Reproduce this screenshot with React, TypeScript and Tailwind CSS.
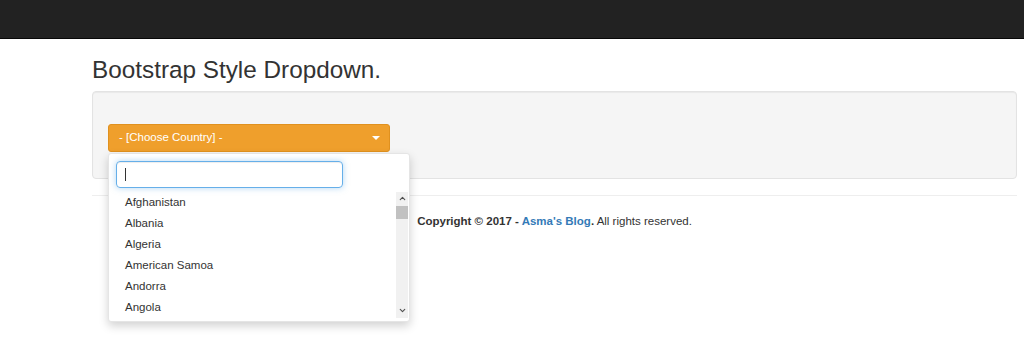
import { ChevronDown, ChevronUp } from 'lucide-react';

const countries = ['Afghanistan', 'Albania', 'Algeria', 'American Samoa', 'Andorra', 'Angola'];

function CountryMenu() {
  return (
    <div className="absolute left-0 top-[29px] z-10 w-[302px] h-[169px] bg-white border border-[#e5e5e5] rounded-[3px] shadow-[0_4px_10px_rgba(0,0,0,0.18)]">
      <div className="px-[7px] pt-[7px] pb-[4px]">
        <div className="relative w-[227px]">
          <input
            className="w-[227px] h-[27px] px-[8px] border border-[#66afe9] rounded-[4px] text-[13px] text-[#555] outline-none caret-transparent shadow-[inset_0_1px_1px_rgba(0,0,0,0.075),0_0_6px_rgba(102,175,233,0.5)]"
            defaultValue=""
          />
          {/* blinking caret as captured */}
          <span className="absolute left-[9px] top-[7px] w-px h-[13px] bg-[#333]" />
        </div>
      </div>
      <div className="flex">
        {/* options */}
        <ul className="flex-1 h-[126px] overflow-hidden">
          {countries.map((c) => (
            <li key={c} className="h-[21px] leading-[21px] pl-[16px] text-[11.5px] text-[#333]">
              {c}
            </li>
          ))}
        </ul>
        {/* fake scrollbar */}
        <div className="w-[12px] h-[126px] mr-[1px] bg-[#f1f1f1] flex flex-col items-center">
          <ChevronUp className="w-[9px] h-[9px] mt-[2px] text-[#505050]" strokeWidth={3} />
          <div className="w-[12px] h-[13px] mt-[3px] bg-[#c1c1c1]" />
          <div className="flex-1" />
          <ChevronDown className="w-[9px] h-[9px] mb-[3px] text-[#505050]" strokeWidth={3} />
        </div>
      </div>
    </div>
  );
}

export default function App() {
  return (
    <div className="min-h-[354px] bg-white" style={{ fontFamily: '"Liberation Sans", Arial, sans-serif' }}>
      <nav className="h-[39px] bg-[#222] border-b border-[#080808]" />

      <div className="pl-[92px] pr-[7px]">
        <h1 className="mt-[16px] mb-[6px] text-[24.3px] leading-[30px] text-[#333]">Bootstrap Style Dropdown.</h1>

        <div className="h-[88px] bg-[#f5f5f5] border border-[#e3e3e3] rounded-[4px] shadow-[inset_0_1px_1px_rgba(0,0,0,0.05)] pl-[15px] pt-[32px]">
          <div className="relative w-[282px]">
            <button className="w-[282px] h-[28px] flex items-center justify-between pl-[10px] pr-[9px] bg-[#ef9f2c] border border-[#e0911f] rounded-[3px] text-white text-[11.5px]">
              <span>- [Choose Country] -</span>
              <span className="w-0 h-0 border-l-[4px] border-r-[4px] border-t-[4px] border-l-transparent border-r-transparent border-t-white" />
            </button>
            <CountryMenu />
          </div>
        </div>

        <hr className="mt-[16px] border-t border-[#eee]" />

        <p className="mt-[17px] text-center text-[11.5px] text-[#333]">
          <b>Copyright © 2017 - <a className="text-[#337ab7]">Asma's Blog</a>.</b> All rights reserved.
        </p>
      </div>
    </div>
  );
}
